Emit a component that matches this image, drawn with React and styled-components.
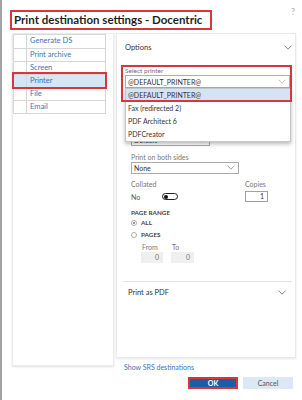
import React from "react";
import styled, { createGlobalStyle } from "styled-components";

const navItems = ["Generate DS", "Print archive", "Screen", "Printer", "File", "Email"];
const printers = ["@DEFAULT_PRINTER@", "Fax (redirected 2)", "PDF Architect 6", "PDFCreator"];

const GlobalStyle = createGlobalStyle`
  html, body {
    margin: 0;
    padding: 0;
    background: #fff;
  }
  body {
    font-family: Lato, "Open Sans", sans-serif;
    color: #333;
  }
  * {
    box-sizing: border-box;
  }
`;

// small chevron used by selects and section headers
const Chevron = ({ color = "#7a7a7a" }) => (
  <svg width="8" height="5" viewBox="0 0 8 5">
    <polyline points="0.5,0.6 4,4.2 7.5,0.6" fill="none" stroke={color} strokeWidth="0.9" />
  </svg>
);

export default function App() {
  return (
    <>
      <GlobalStyle />
      <Page>
        <Header>
          <TitleBox>Print destination settings - Docentric</TitleBox>
          <Help>?</Help>
        </Header>

        <Body>
          <LeftCard>
            <NavList>
              {navItems.map((item) => (
                <NavRow key={item} $selected={item === "Printer"}>
                  <NavMark />
                  <NavLabel>{item}</NavLabel>
                </NavRow>
              ))}
            </NavList>
          </LeftCard>

          <RightColumn>
            <RightCard>
              <SectionHeader $left={8} $right={3} $height={26}>
                <SectionTitle>Options</SectionTitle>
                <Chevron />
              </SectionHeader>

              <Highlight>
                <SmallLabel>Select printer</SmallLabel>
                <SelectBox $width={165} $border="#9fb0c4">
                  <span>@DEFAULT_PRINTER@</span>
                  <Chevron color="#b5b5b5" />
                </SelectBox>
                <Dropdown>
                  {printers.map((p, i) => (
                    <DropItem key={p} $active={i === 0}>{p}</DropItem>
                  ))}
                </Dropdown>
              </Highlight>

              <Form>
                {/* field hidden under the open dropdown: only its box shows */}
                <Field>
                  <FieldLabel />
                  <SelectBox $width={79}>
                    <span>Default</span>
                    <Chevron color="#999" />
                  </SelectBox>
                </Field>
                <Field>
                  <FieldLabel>Print on both sides</FieldLabel>
                  <SelectBox $width={108}>
                    <span>None</span>
                    <Chevron color="#999" />
                  </SelectBox>
                </Field>

                <Row>
                  <Column $width={114}>
                    <FieldLabel>Collated</FieldLabel>
                    <ValueRow>
                      <ValueText>No</ValueText>
                      <Toggle />
                    </ValueRow>
                  </Column>
                  <Column $width={23}>
                    <FieldLabel>Copies</FieldLabel>
                    <NumberBox>1</NumberBox>
                  </Column>
                </Row>

                <GroupTitle>PAGE RANGE</GroupTitle>
                <RadioRow>
                  <Radio $checked />
                  <RadioLabel>ALL</RadioLabel>
                </RadioRow>
                <RadioRow>
                  <Radio />
                  <RadioLabel>PAGES</RadioLabel>
                </RadioRow>
                <RangeRow>
                  <Column $width={22}>
                    <RangeLabel>From</RangeLabel>
                    <GreyInput>0</GreyInput>
                  </Column>
                  <Column $width={23}>
                    <RangeLabel>To</RangeLabel>
                    <GreyInput>0</GreyInput>
                  </Column>
                </RangeRow>
              </Form>

              <Divider />
              <SectionHeader $left={11} $right={9} $height={20}>
                <SectionTitle>Print as PDF</SectionTitle>
                <Chevron />
              </SectionHeader>
            </RightCard>

            <Link>Show SRS destinations</Link>
            <ButtonRow>
              <Button $primary>OK</Button>
              <Button>Cancel</Button>
            </ButtonRow>
          </RightColumn>
        </Body>
      </Page>
    </>
  );
}

const Page = styled.div`
  width: 302px;
  height: 400px;
  border-left: 2px solid #a3a3a3;
  padding: 10px 6px 0 8px;
  display: flex;
  flex-direction: column;
`;

const Header = styled.div`
  display: flex;
  justify-content: space-between;
  align-items: flex-start;
  height: 20px;
`;

const TitleBox = styled.div`
  width: 202px;
  height: 20px;
  border: 2px solid #d6373d;
  padding-left: 2px;
  font-weight: 700;
  font-size: 11.5px;
  line-height: 16px;
  color: #1f1f1f;
  white-space: nowrap;
`;

const Help = styled.div`
  font-size: 9px;
  line-height: 10px;
  color: #b0b0b0;
  margin-top: -3px;
  margin-right: 1px;
`;

const Body = styled.div`
  display: flex;
  align-items: flex-start;
  gap: 2px;
  margin-top: 3px;
  padding-left: 2px;
`;

const LeftCard = styled.div`
  width: 102px;
  height: 333px;
  border: 1px solid #ebebeb;
  box-shadow: 0 1px 2px rgba(0, 0, 0, 0.12);
`;

const NavList = styled.div`
  width: 93px;
  border: 1px solid #d6d6d6;
`;

const NavRow = styled.div`
  display: flex;
  height: 13px;
  background: ${(p) => (p.$selected ? "#d6e6f6" : "#fff")};
  outline: ${(p) => (p.$selected ? "2px solid #d6373d" : "none")};
  position: ${(p) => (p.$selected ? "relative" : "static")};
  z-index: ${(p) => (p.$selected ? 1 : "auto")};

  & + & {
    border-top: 1px solid #d6d6d6;
  }
`;

const NavMark = styled.div`
  width: 13px;
  border-right: 1px solid #d6d6d6;
`;

const NavLabel = styled.div`
  padding-left: 3px;
  font-size: 7.5px;
  line-height: 12px;
  color: #3a73b8;
`;

const RightColumn = styled.div`
  width: 180px;
  display: flex;
  flex-direction: column;
`;

const RightCard = styled.div`
  height: 325px;
  border: 1px solid #e9e9e9;
  box-shadow: 0 1px 2px rgba(0, 0, 0, 0.1);
`;

const SectionHeader = styled.div`
  height: ${(p) => p.$height}px;
  display: flex;
  align-items: center;
  justify-content: space-between;
  padding: 0 ${(p) => p.$right}px 0 ${(p) => p.$left}px;
`;

const SectionTitle = styled.div`
  font-size: 7.5px;
  color: #333;
`;

const Highlight = styled.div`
  position: relative;
  margin: 5px 3px 0 4px;
  height: 37px;
  padding: 2px 2px 14px 4px;

  &::after {
    content: "";
    position: absolute;
    inset: 0;
    border: 2px solid #d6373d;
    z-index: 3;
    pointer-events: none;
  }
`;

const SmallLabel = styled.div`
  font-size: 6.5px;
  line-height: 8px;
  color: #6f6f6f;
`;

const SelectBox = styled.div`
  width: ${(p) => p.$width}px;
  height: ${(p) => (p.$border ? 13 : 12)}px;
  border: 1px solid ${(p) => p.$border || "#ababab"};
  display: flex;
  align-items: center;
  justify-content: space-between;
  padding: 0 3px 0 2px;
  font-size: 7px;
  color: #333;
  background: #fff;
`;

const Dropdown = styled.div`
  position: absolute;
  top: 23px;
  left: 4px;
  width: 166px;
  background: #fff;
  border: 1px solid #c6c6c6;
  box-shadow: 0 2px 4px rgba(0, 0, 0, 0.28);
  z-index: 2;
`;

const DropItem = styled.div`
  height: 13px;
  line-height: 13px;
  padding-left: 2px;
  font-size: 7px;
  color: #333;
  background: ${(p) => (p.$active ? "#d4e4f4" : "#fff")};
`;

const Form = styled.div`
  margin-top: 23px;
  padding-left: 14px;
`;

const Field = styled.div`
  margin-bottom: 6.5px;
`;

const FieldLabel = styled.div`
  min-height: 9px;
  font-size: 7px;
  line-height: 9px;
  color: #777;
`;

const Row = styled.div`
  display: flex;
`;

const Column = styled.div`
  width: ${(p) => p.$width}px;
`;

const ValueRow = styled.div`
  display: flex;
  align-items: center;
  height: 11px;
  margin-top: 2px;
`;

const ValueText = styled.span`
  width: 31px;
  font-size: 7px;
  color: #555;
`;

const Toggle = styled.span`
  position: relative;
  width: 16px;
  height: 7px;
  border: 1px solid #222;
  border-radius: 4px;

  &::before {
    content: "";
    position: absolute;
    left: 1px;
    top: 0.5px;
    width: 4px;
    height: 4px;
    border-radius: 50%;
    background: #111;
  }
`;

const NumberBox = styled.div`
  margin-top: 2px;
  height: 11px;
  border: 1px solid #a0a0a0;
  font-size: 7px;
  line-height: 9px;
  text-align: right;
  padding-right: 3px;
  color: #333;
`;

const GroupTitle = styled.div`
  margin-top: 5.5px;
  font-size: 6.3px;
  line-height: 9px;
  font-weight: 700;
  color: #444;
`;

const RadioRow = styled.div`
  display: flex;
  align-items: center;
  height: 12px;
`;

const Radio = styled.span`
  width: 6px;
  height: 6px;
  border-radius: 50%;
  border: 1px solid #aaa;
  margin-right: 4px;
  display: flex;
  align-items: center;
  justify-content: center;

  &::after {
    content: "";
    width: 2px;
    height: 2px;
    border-radius: 50%;
    background: ${(p) => (p.$checked ? "#777" : "transparent")};
  }
`;

const RadioLabel = styled.span`
  font-size: 6.3px;
  font-weight: 700;
  color: #444;
`;

const RangeRow = styled.div`
  display: flex;
  gap: 8px;
  margin: 2px 0 0 10px;
`;

const RangeLabel = styled.div`
  font-size: 7px;
  line-height: 9px;
  padding-left: 1px;
  color: #777;
`;

const GreyInput = styled.div`
  margin-top: 0.5px;
  height: 11px;
  background: #efefef;
  font-size: 7px;
  line-height: 11px;
  text-align: right;
  padding-right: 4px;
  color: #777;
`;

const Divider = styled.div`
  margin: 18px 3px 0 6px;
  border-top: 1px solid #e3e3e3;
`;

const Link = styled.div`
  margin: 4px 0 0 8px;
  font-size: 7px;
  line-height: 10px;
  color: #3a73b8;
`;

const ButtonRow = styled.div`
  display: flex;
  justify-content: flex-end;
  gap: 5px;
  margin-top: 5px;
  padding-right: 3px;
`;

const Button = styled.div`
  width: 50px;
  height: 12px;
  display: flex;
  align-items: center;
  justify-content: center;
  font-size: 7px;
  font-weight: ${(p) => (p.$primary ? 700 : 400)};
  color: ${(p) => (p.$primary ? "#fff" : "#555")};
  background: ${(p) => (p.$primary ? "#1f5ca6" : "#dce8f5")};
  border: ${(p) => (p.$primary ? "2px solid #d6373d" : "none")};
`;
